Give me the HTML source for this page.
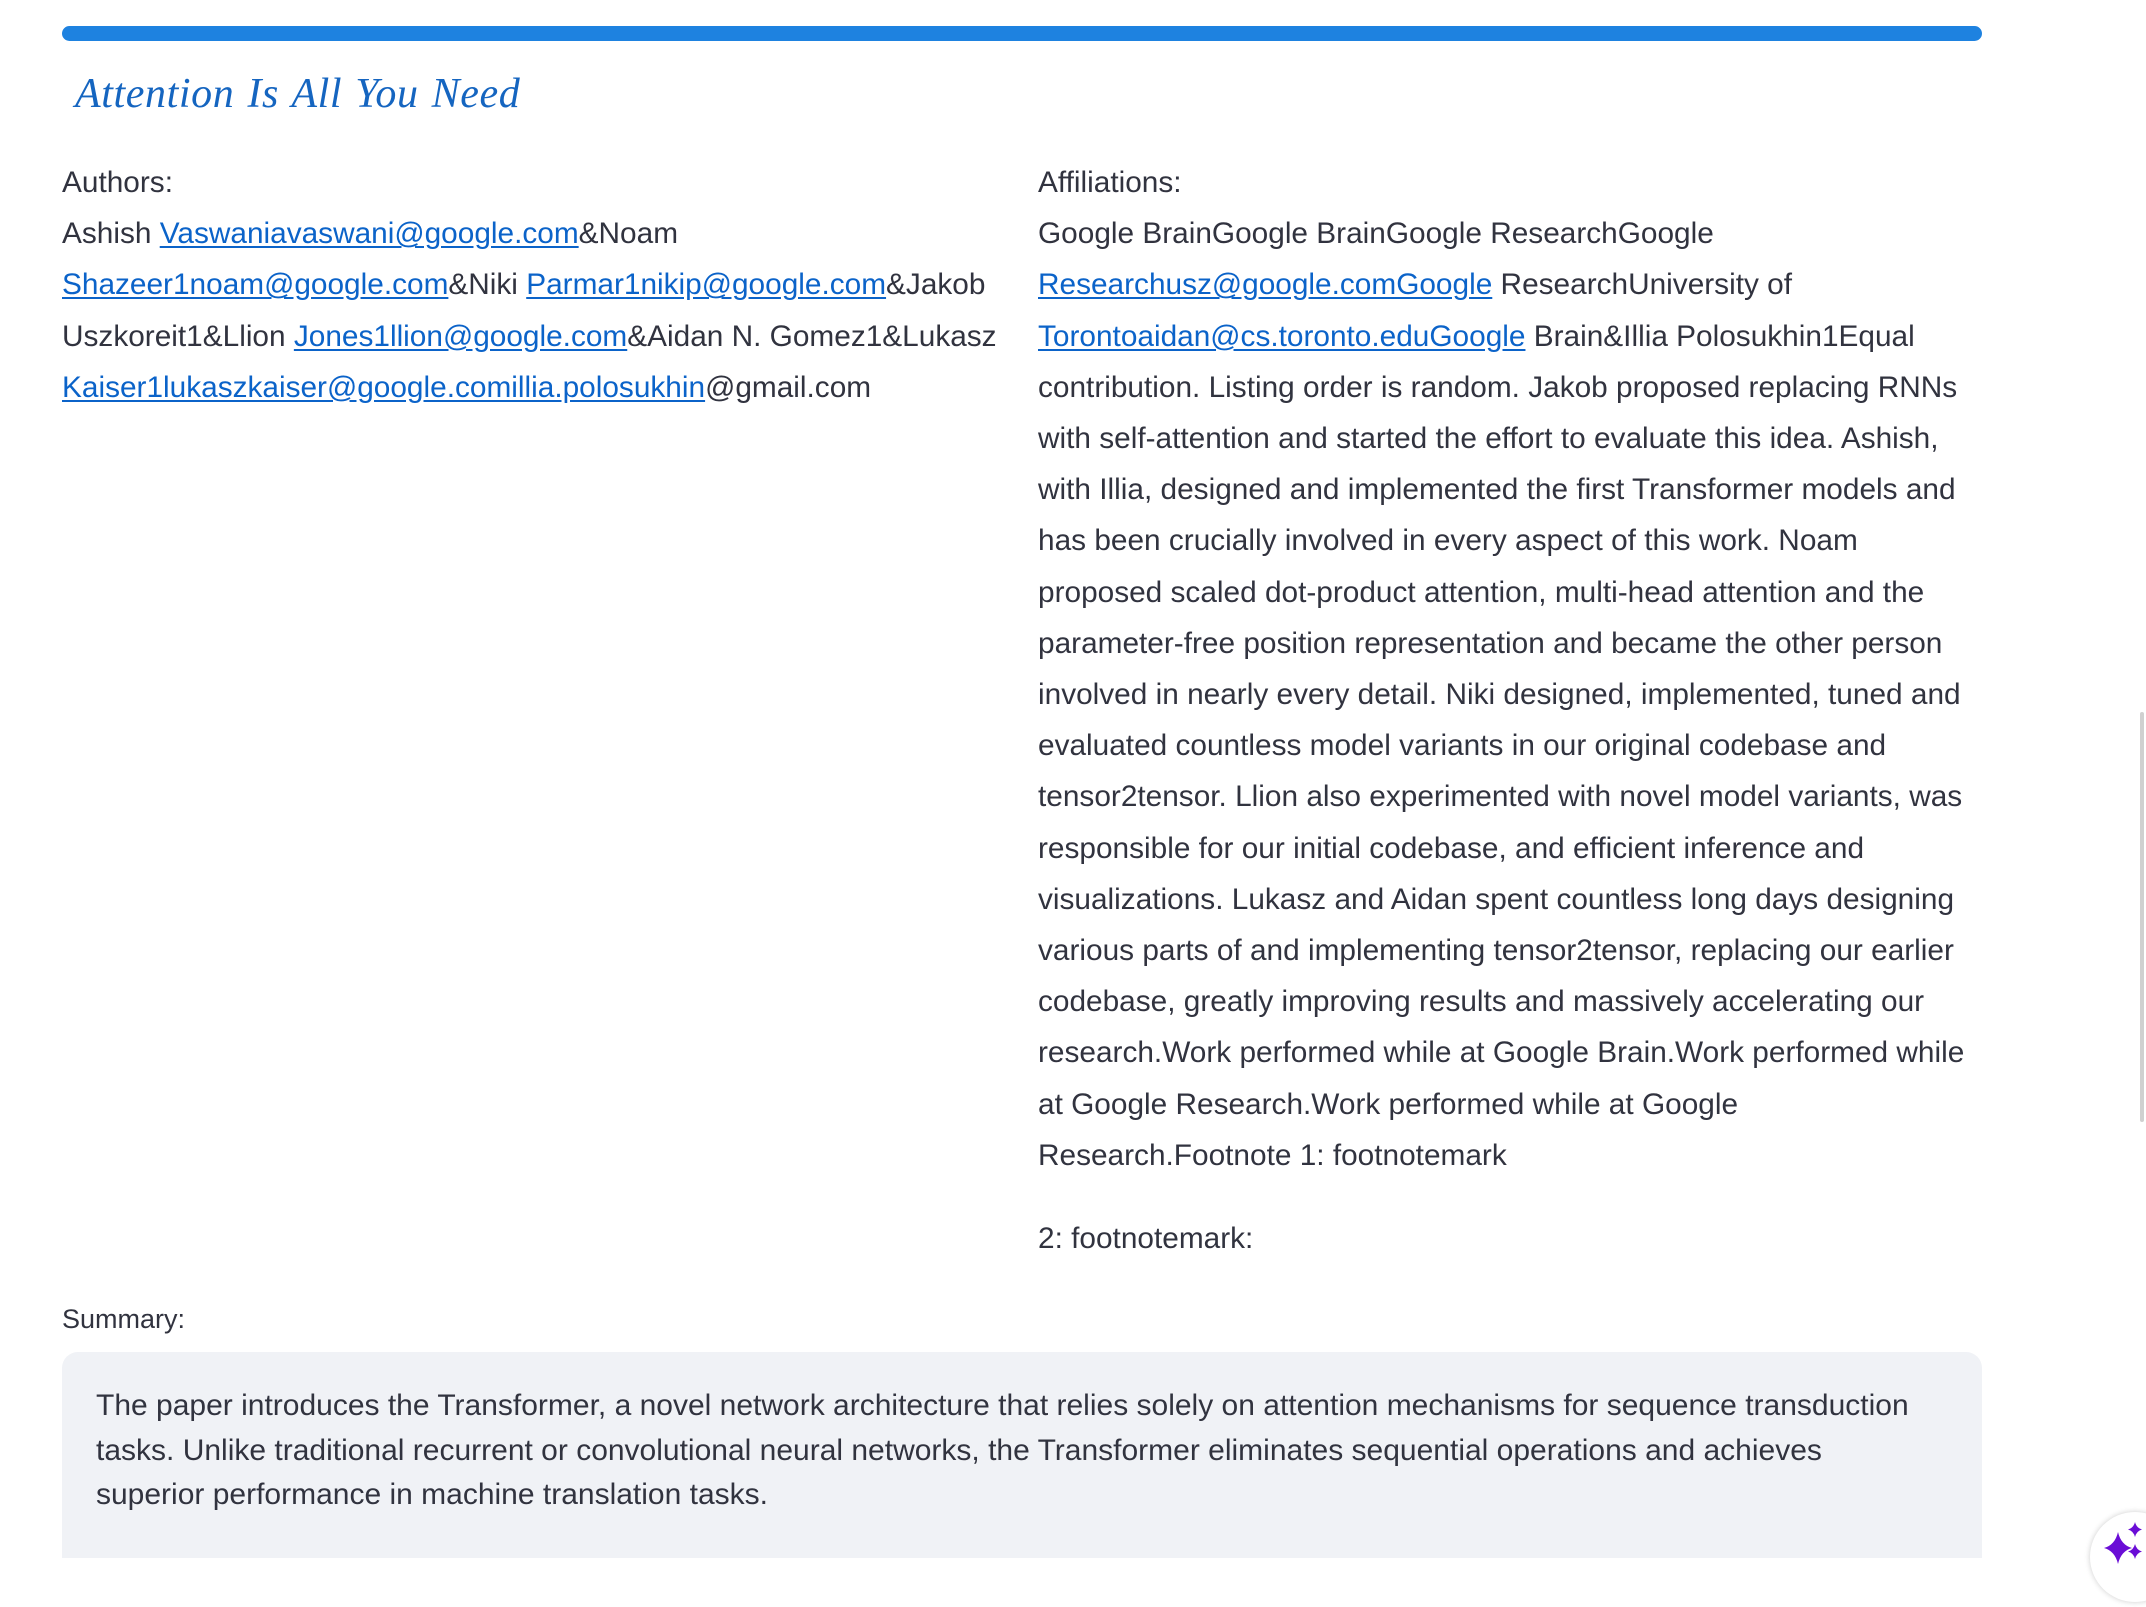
<!DOCTYPE html>
<html><head><meta charset="utf-8"><style>
html,body{margin:0;padding:0;background:#fff;}
body{width:2146px;height:1558px;overflow:hidden;position:relative;font-family:"Liberation Sans",sans-serif;color:#31333f;}
.bar{position:absolute;left:62px;top:26px;width:1920px;height:15px;background:#1e82e0;border-radius:8px;}
.title{position:absolute;left:75px;top:70px;font-family:"Liberation Serif",serif;font-style:italic;font-size:42px;color:#1565c0;letter-spacing:0.6px;word-spacing:2px;}
.col{position:absolute;font-size:29.8px;line-height:51.2px;}
.col div{white-space:nowrap;}
a{color:#0b63c9;text-decoration:underline;text-underline-offset:3px;}
.lab{position:absolute;left:62px;top:1304px;font-size:27px;}
.box{position:absolute;left:62px;top:1352px;width:1920px;height:206px;background:#f0f2f6;border-radius:16px 16px 0 0;}
.box div{position:absolute;left:34px;font-size:30px;white-space:nowrap;}
.scroll{position:absolute;left:2140px;top:712px;width:4px;height:410px;background:#d0d0d0;border-radius:2px;}
.btn{position:absolute;left:2090px;top:1512px;width:90px;height:90px;border-radius:50%;background:#fff;box-shadow:0 0 6px rgba(0,0,0,.2);}
</style></head><body>
<div class="bar"></div>
<div class="title">Attention Is All You Need</div>
<div class="col" style="left:62px;top:157px;">
<div>Authors:</div>
<div>Ashish <a>Vaswaniavaswani@google.com</a>&amp;Noam</div>
<div><a>Shazeer1noam@google.com</a>&amp;Niki <a>Parmar1nikip@google.com</a>&amp;Jakob</div>
<div>Uszkoreit1&amp;Llion <a>Jones1llion@google.com</a>&amp;Aidan N. Gomez1&amp;Lukasz</div>
<div><a>Kaiser1lukaszkaiser@google.comillia.polosukhin</a>@gmail.com</div>
</div>
<div class="col" style="left:1038px;top:157px;">
<div>Affiliations:</div>
<div>Google BrainGoogle BrainGoogle ResearchGoogle</div>
<div><a>Researchusz@google.comGoogle</a> ResearchUniversity of</div>
<div><a>Torontoaidan@cs.toronto.eduGoogle</a> Brain&amp;Illia Polosukhin1Equal</div>
<div>contribution. Listing order is random. Jakob proposed replacing RNNs</div>
<div>with self-attention and started the effort to evaluate this idea. Ashish,</div>
<div>with Illia, designed and implemented the first Transformer models and</div>
<div>has been crucially involved in every aspect of this work. Noam</div>
<div>proposed scaled dot-product attention, multi-head attention and the</div>
<div>parameter-free position representation and became the other person</div>
<div>involved in nearly every detail. Niki designed, implemented, tuned and</div>
<div>evaluated countless model variants in our original codebase and</div>
<div>tensor2tensor. Llion also experimented with novel model variants, was</div>
<div>responsible for our initial codebase, and efficient inference and</div>
<div>visualizations. Lukasz and Aidan spent countless long days designing</div>
<div>various parts of and implementing tensor2tensor, replacing our earlier</div>
<div>codebase, greatly improving results and massively accelerating our</div>
<div>research.Work performed while at Google Brain.Work performed while</div>
<div>at Google Research.Work performed while at Google</div>
<div>Research.Footnote 1: footnotemark</div>
<div style="margin-top:32px">2: footnotemark:</div>
</div>
<div class="lab">Summary:</div>
<div class="box">
<div style="top:37px">The paper introduces the Transformer, a novel network architecture that relies solely on attention mechanisms for sequence transduction</div>
<div style="top:82px">tasks. Unlike traditional recurrent or convolutional neural networks, the Transformer eliminates sequential operations and achieves</div>
<div style="top:126px">superior performance in machine translation tasks.</div>
</div>
<div class="scroll"></div>
<div class="btn"><svg width="90" height="90" viewBox="0 0 90 90"><path d="M28 20 Q31 33 42 36 Q31 39 28 52 Q25 39 14 36 Q25 33 28 20Z" fill="#6a0dd6"/><path d="M45 10 Q46.5 16 52 17.5 Q46.5 19 45 25 Q43.5 19 38 17.5 Q43.5 16 45 10Z" fill="#6a0dd6"/><path d="M45 32 Q46.5 38 52 39.5 Q46.5 41 45 47 Q43.5 41 38 39.5 Q43.5 38 45 32Z" fill="#6a0dd6"/></svg></div>
</body></html>
